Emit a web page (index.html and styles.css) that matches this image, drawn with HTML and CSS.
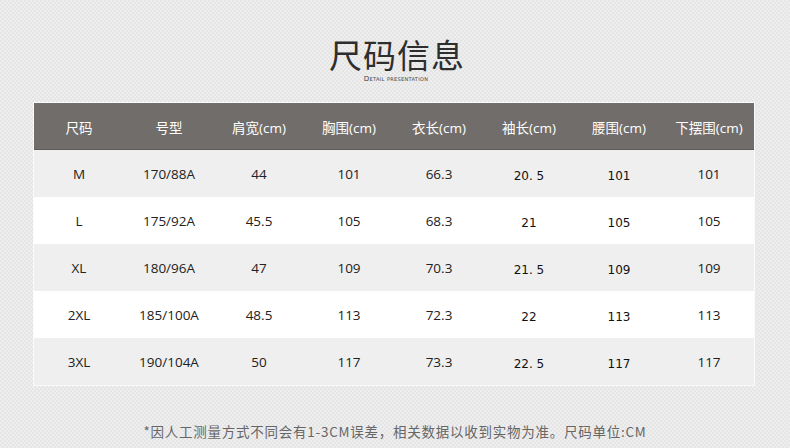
FILE: index.html
```html
<!DOCTYPE html>
<html lang="zh-CN">
<head>
<meta charset="utf-8">
<link rel="stylesheet" href="styles.css">
</head>
<body>
<div class="page">
  <header class="heading">
    <h1 class="title">尺码信息</h1>
    <div class="subtitle">Detail presentation</div>
  </header>
  <div class="table-frame">
    <div class="row head">
      <div>尺码</div><div>号型</div><div>肩宽(cm)</div><div>胸围(cm)</div><div>衣长(cm)</div><div>袖长(cm)</div><div>腰围(cm)</div><div>下摆围(cm)</div>
    </div>
    <div class="row grey">
      <div>M</div><div>170/88A</div><div>44</div><div>101</div><div>66.3</div><div class="alt">20. 5</div><div class="alt">101</div><div>101</div>
    </div>
    <div class="row">
      <div>L</div><div>175/92A</div><div>45.5</div><div>105</div><div>68.3</div><div class="alt">21</div><div class="alt">105</div><div>105</div>
    </div>
    <div class="row grey">
      <div>XL</div><div>180/96A</div><div>47</div><div>109</div><div>70.3</div><div class="alt">21. 5</div><div class="alt">109</div><div>109</div>
    </div>
    <div class="row">
      <div>2XL</div><div>185/100A</div><div>48.5</div><div>113</div><div>72.3</div><div class="alt">22</div><div class="alt">113</div><div>113</div>
    </div>
    <div class="row grey">
      <div>3XL</div><div>190/104A</div><div>50</div><div>117</div><div>73.3</div><div class="alt">22. 5</div><div class="alt">117</div><div>117</div>
    </div>
  </div>
  <p class="note">*因人工测量方式不同会有1-3CM误差，相关数据以收到实物为准。尺码单位:CM</p>
</div>
</body>
</html>
```

FILE: styles.css
```css
* { box-sizing: border-box; }
html, body { margin: 0; padding: 0; }
body {
  width: 790px;
  height: 448px;
  overflow: hidden;
  background-color: #e5e5e5;
  background-image:
    linear-gradient(45deg, #eeeeee 25%, transparent 25%, transparent 75%, #eeeeee 75%),
    linear-gradient(45deg, #eeeeee 25%, transparent 25%, transparent 75%, #eeeeee 75%);
  background-size: 4px 4px;
  background-position: 0 0, 2px 2px;
  font-family: "Open Sans", "Noto Sans CJK SC", sans-serif;
}
.page {
  display: flex;
  flex-direction: column;
  align-items: center;
  padding-top: 36px;
}
.heading {
  display: flex;
  flex-direction: column;
  align-items: center;
  height: 66px;
}
.title {
  margin: 0;
  font-family: "Noto Sans CJK SC", sans-serif;
  font-weight: 400;
  font-size: 33px;
  line-height: 36px;
  letter-spacing: 1px;
  color: #2e2e2e;
  margin-left: 4px;
}
.subtitle {
  font-family: "DejaVu Sans", sans-serif;
  font-variant: small-caps;
  font-size: 7px;
  line-height: 8px;
  letter-spacing: 0.3px;
  color: #444;
  margin-top: 3px;
  margin-left: 2px;
}
.table-frame {
  width: 722px;
  margin-left: -2px;
  border: 1px solid #fafafa;
  background: #fff;
}
.row {
  display: grid;
  grid-template-columns: repeat(8, 90px);
  height: 47px;
  align-items: center;
  text-align: center;
  font-size: 13.5px;
  color: #222;
  background: #fff;
}
.row.grey { background: #efefef; }
.row.head {
  background: #716d6b;
  color: #fff;
  font-size: 13.5px;
  border-bottom: 1px solid #5e5a58;
}
.row > div { padding-top: 1px; }
.row .alt {
  padding-top: 4px;
  font-family: "DejaVu Sans", "Noto Sans CJK SC", sans-serif;
  font-size: 12px;
  color: #111;
}
.note {
  margin: 35px 0 0 0;
  font-family: "Noto Sans CJK SC", sans-serif;
  font-size: 13.5px;
  line-height: 20px;
  letter-spacing: 0.75px;
  color: #666;
}
```
